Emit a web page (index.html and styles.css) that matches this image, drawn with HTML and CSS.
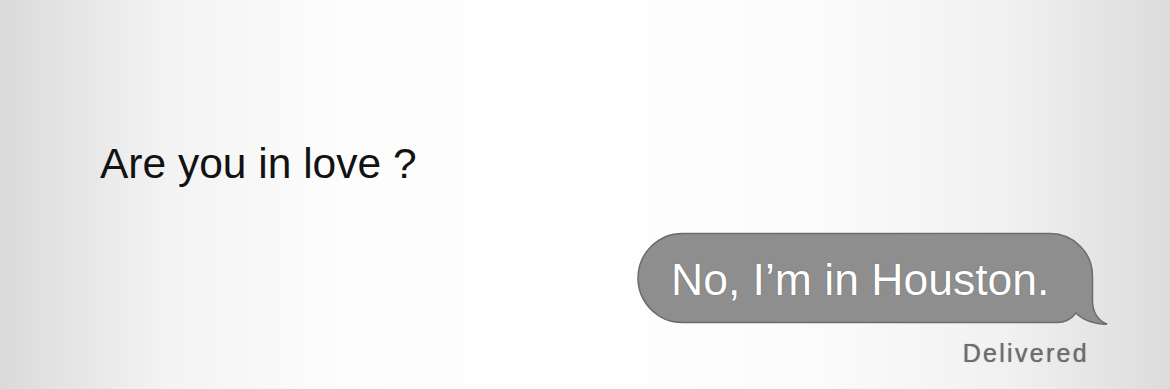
FILE: index.html
```html
<!DOCTYPE html>
<html lang="en">
<head>
<meta charset="utf-8">
<title>Messages</title>
<link rel="stylesheet" href="styles.css">
</head>
<body>
<main class="chat">
  <div class="incoming">Are you in love ?</div>
  <div class="outgoing">
    <div class="bubble">
      <svg class="bubble-shape" width="472" height="93" viewBox="0 0 472 93" aria-hidden="true">
        <path d="M44.5 0.5 H412 A42.5 42.5 0 0 1 454.5 43 V68 C454.5 79 460 87.5 469 91 C461 92 446 88.5 438 80 C433 86.5 427 89.5 419 89.5 H44.5 A44.5 44.5 0 0 1 44.5 0.5 Z" fill="#8e8e8e" stroke="#6c6c6c" stroke-width="1.5"/>
      </svg>
      <span class="bubble-text">No, I’m in Houston.</span>
    </div>
    <div class="status">Delivered</div>
  </div>
</main>
</body>
</html>
```
FILE: styles.css
```css
html, body {
  margin: 0;
  padding: 0;
}

body {
  width: 1170px;
  height: 389px;
  overflow: hidden;
  font-family: "Liberation Sans", Arial, sans-serif;
}

.chat {
  height: 389px;
  box-sizing: border-box;
  padding-top: 140px;
  display: flex;
  flex-direction: column;
  background: linear-gradient(to right, #dadada 0%, #f3f3f3 14%, #fdfdfd 30%, #ffffff 50%, #fbfbfb 70%, #f1f1f1 86%, #dcdcdc 100%);
}

.incoming {
  padding-left: 100px;
  font-size: 42.5px;
  line-height: 48px;
  color: #121212;
}

.outgoing {
  margin-top: 45px;
  padding-right: 77px;
  display: flex;
  flex-direction: column;
  align-items: flex-end;
}

.bubble {
  position: relative;
  width: 455px;
  height: 90px;
  box-sizing: border-box;
  padding: 4px 0 0 33px;
  display: flex;
  align-items: center;
}

.bubble-shape {
  position: absolute;
  left: 0;
  top: 0;
  overflow: visible;
}

.bubble-text {
  position: relative;
  font-size: 44.5px;
  line-height: 50px;
  color: #ffffff;
  white-space: nowrap;
  text-shadow: 0 0 1px rgba(60, 60, 60, 0.7);
}

.status {
  margin-top: 16px;
  margin-right: 4px;
  font-size: 25px;
  line-height: 28px;
  letter-spacing: 2.3px;
  color: #6e6e6e;
  text-shadow: 0 0 0.8px #6e6e6e;
}
```
